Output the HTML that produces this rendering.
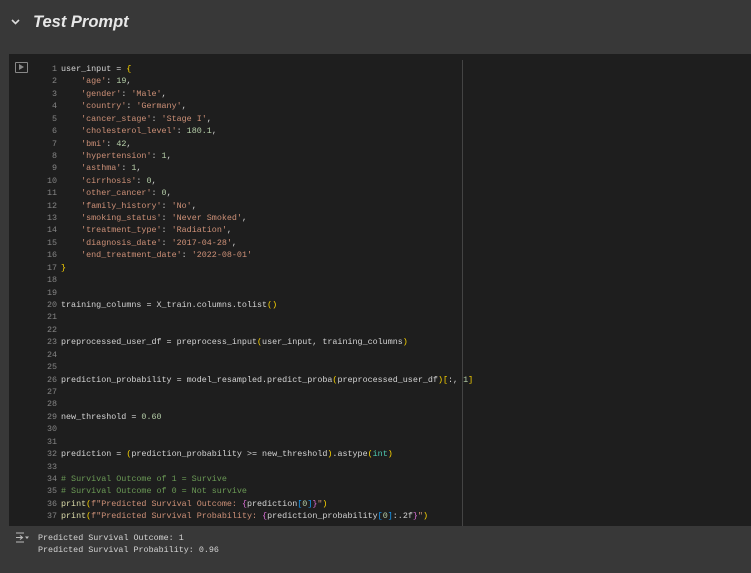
<!DOCTYPE html>
<html><head><meta charset="utf-8"><style>
html,body{margin:0;padding:0;width:751px;height:573px;overflow:hidden;background:#383838;}
body{position:relative;font-family:"Liberation Mono",monospace;}
.title{position:absolute;left:33px;top:13px;font:italic bold 16.5px "Liberation Sans",sans-serif;color:#e8e8e8;}
.chev{position:absolute;left:11px;top:19px;}
.cell{position:absolute;left:9px;top:54px;width:742px;height:472px;background:#1e1e1e;}
.vline{position:absolute;left:462px;top:60px;width:1px;height:466px;background:#444;}
.run{position:absolute;left:15px;top:62px;width:11px;height:9px;border:1px solid #888;border-radius:1px;}
.run:after{content:"";position:absolute;left:3px;top:1px;border-left:5px solid #888;border-top:3.5px solid transparent;border-bottom:3.5px solid transparent;}
.ln,.tx{position:absolute;top:63px;font-size:8.4px;line-height:12.42px;color:#d4d4d4;white-space:pre;}
.ln{left:30px;width:27px;text-align:right;color:#858585;}
.tx{left:61px;}
.s{color:#ce9178}.n{color:#b5cea8}.y{color:#ffd700}.c{color:#6a9955}.f{color:#dcdcaa}.p{color:#da70d6}.b{color:#179fff}.t{color:#4ec9b0}
.out{position:absolute;left:38px;top:532px;font-size:8.4px;line-height:12px;color:#d4d4d4;white-space:pre;}
</style></head><body>
<svg class="chev" width="9" height="6" viewBox="0 0 9 6"><path d="M1 1 L4.5 4.5 L8 1" stroke="#ddd" stroke-width="1.6" fill="none"/></svg>
<div class="title">Test Prompt</div>
<div class="cell"></div>
<div class="vline"></div>
<div class="run"></div>
<div class="ln">1
2
3
4
5
6
7
8
9
10
11
12
13
14
15
16
17
18
19
20
21
22
23
24
25
26
27
28
29
30
31
32
33
34
35
36
37</div>
<div class="tx">user_input = <span class="y">{</span>
    <span class="s">'age'</span>: <span class="n">19</span>,
    <span class="s">'gender'</span>: <span class="s">'Male'</span>,
    <span class="s">'country'</span>: <span class="s">'Germany'</span>,
    <span class="s">'cancer_stage'</span>: <span class="s">'Stage I'</span>,
    <span class="s">'cholesterol_level'</span>: <span class="n">180.1</span>,
    <span class="s">'bmi'</span>: <span class="n">42</span>,
    <span class="s">'hypertension'</span>: <span class="n">1</span>,
    <span class="s">'asthma'</span>: <span class="n">1</span>,
    <span class="s">'cirrhosis'</span>: <span class="n">0</span>,
    <span class="s">'other_cancer'</span>: <span class="n">0</span>,
    <span class="s">'family_history'</span>: <span class="s">'No'</span>,
    <span class="s">'smoking_status'</span>: <span class="s">'Never Smoked'</span>,
    <span class="s">'treatment_type'</span>: <span class="s">'Radiation'</span>,
    <span class="s">'diagnosis_date'</span>: <span class="s">'2017-04-28'</span>,
    <span class="s">'end_treatment_date'</span>: <span class="s">'2022-08-01'</span>
<span class="y">}</span>


training_columns = X_train.columns.tolist<span class="y">()</span>


preprocessed_user_df = preprocess_input<span class="y">(</span>user_input, training_columns<span class="y">)</span>


prediction_probability = model_resampled.predict_proba<span class="y">(</span>preprocessed_user_df<span class="y">)[</span>:, <span class="n">1</span><span class="y">]</span>


new_threshold = <span class="n">0.60</span>


prediction = <span class="y">(</span>prediction_probability &gt;= new_threshold<span class="y">)</span>.astype<span class="y">(</span><span class="t">int</span><span class="y">)</span>

<span class="c"># Survival Outcome of 1 = Survive</span>
<span class="c"># Survival Outcome of 0 = Not survive</span>
<span class="f">print</span><span class="y">(</span><span class="s">f"Predicted Survival Outcome: </span><span class="p">{</span>prediction<span class="b">[</span><span class="n">0</span><span class="b">]</span><span class="p">}</span><span class="s">"</span><span class="y">)</span>
<span class="f">print</span><span class="y">(</span><span class="s">f"Predicted Survival Probability: </span><span class="p">{</span>prediction_probability<span class="b">[</span><span class="n">0</span><span class="b">]</span>:.2f<span class="p">}</span><span class="s">"</span><span class="y">)</span></div>
<svg style="position:absolute;left:15px;top:532px" width="14" height="12" viewBox="0 0 14 12"><path d="M1 1H9M1 5.5H7M1 10H9M5 3.5L7.5 5.5L5 7.5" stroke="#bbb" stroke-width="1.1" fill="none"/><path d="M10 4.5L12 7L14 4.5Z" fill="#bbb"/></svg>
<div class="out">Predicted Survival Outcome: 1
Predicted Survival Probability: 0.96</div>
</body></html>
